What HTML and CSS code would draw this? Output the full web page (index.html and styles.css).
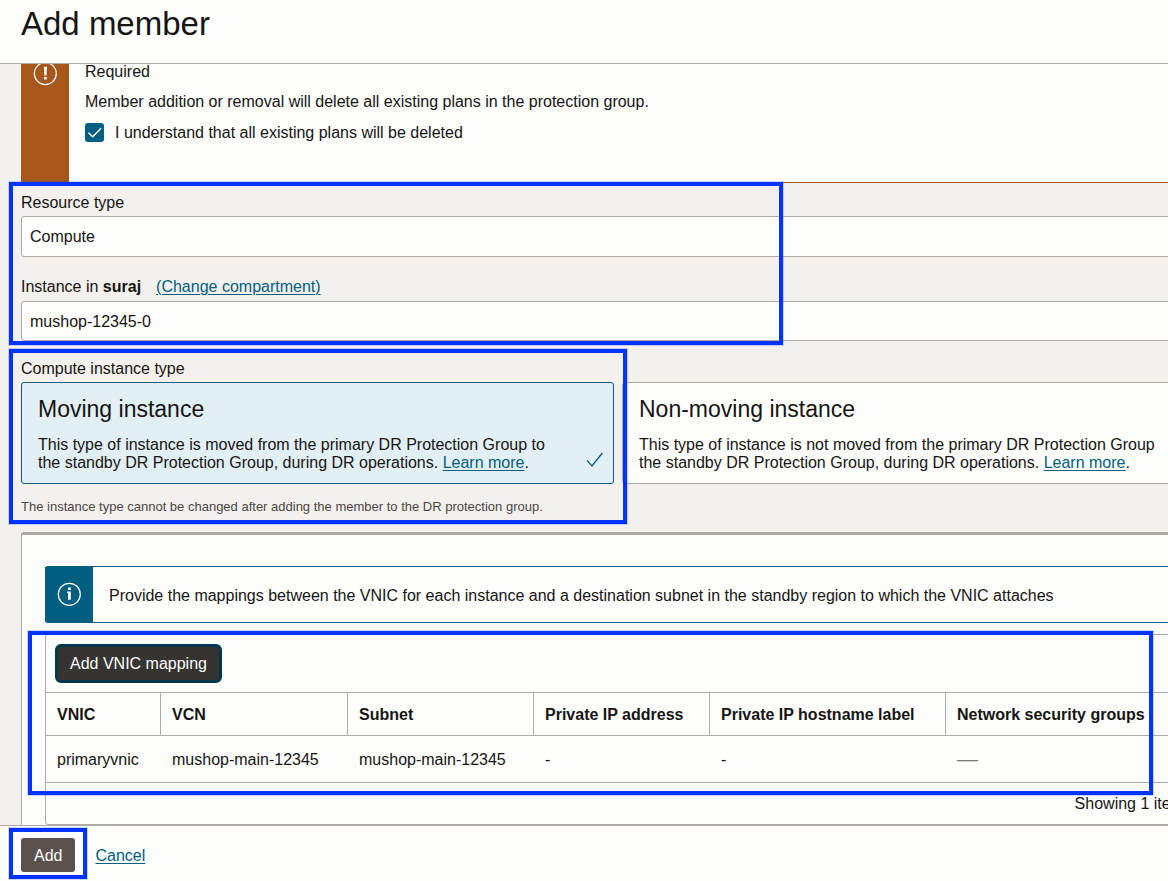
FILE: index.html
```html
<!DOCTYPE html>
<html lang="en">
<head>
<meta charset="utf-8">
<title>Add member</title>
<link rel="stylesheet" href="styles.css">
</head>
<body>
<div class="drawer">
  <header class="drawer-header"><h1>Add member</h1></header>
  <main class="drawer-body">
    <form class="form" id="member-form">
      <section class="alert">
        <div class="alert-icon">
          <svg width="24" height="24" viewBox="0 0 24 24" aria-hidden="true"><circle cx="12.3" cy="11.6" r="11" fill="none" stroke="currentColor" stroke-width="1.2"/><path d="M10.9 4.8h3l-.4 8.6h-2.2zM11 15h2.8v2.6H11z" fill="currentColor"/></svg>
        </div>
        <div class="alert-text">
          <p>Required</p>
          <p>Member addition or removal will delete all existing plans in the protection group.</p>
          <label class="check"><span class="check-box"><input type="checkbox" checked><svg width="19" height="19" viewBox="0 0 19 19" aria-hidden="true"><path d="M3.5 9.7l4.2 4L16 5.3" fill="none" stroke="currentColor" stroke-width="1.5"/></svg></span><span class="check-text">I understand that all existing plans will be deleted</span></label>
        </div>
      </section>

      <div class="field">
        <label for="resource-type">Resource type</label>
        <select id="resource-type"><option>Compute</option></select>
      </div>
      <div class="field">
        <div class="label-row"><label for="instance">Instance in <b>suraj</b></label><a href="#">(Change compartment)</a></div>
        <select id="instance"><option>mushop-12345-0</option></select>
      </div>
      <fieldset class="choices">
        <legend>Compute instance type</legend>
        <div class="cards">
          <div class="card selected">
            <input type="radio" name="kind" id="moving" checked>
            <label class="card-title" for="moving">Moving instance</label>
            <p>This type of instance is moved from the primary DR Protection Group to the standby DR Protection Group, during DR operations. <a href="#">Learn more</a>.</p>
            <svg class="card-tick" width="18" height="16" viewBox="0 0 18 16" aria-hidden="true"><path d="M1 8.4l5 5.6L16.3 1" fill="none" stroke="currentColor" stroke-width="1.3"/></svg>
          </div>
          <div class="card">
            <input type="radio" name="kind" id="non-moving">
            <label class="card-title" for="non-moving">Non-moving instance</label>
            <p>This type of instance is not moved from the primary DR Protection Group the standby DR Protection Group, during DR operations. <a href="#">Learn more</a>.</p>
          </div>
        </div>
        <p class="hint">The instance type cannot be changed after adding the member to the DR protection group.</p>
      </fieldset>

      <section class="panel">
        <div class="info">
          <div class="info-icon">
            <svg width="24" height="24" viewBox="0 0 24 24" aria-hidden="true"><circle cx="12.3" cy="12.3" r="11" fill="none" stroke="currentColor" stroke-width="1.2"/><path d="M11 5.4h2.8v2.7H11zM10.2 9.6h3.6v8.2H11v-6.9h-.8z" fill="currentColor"/></svg>
          </div>
          <p>Provide the mappings between the VNIC for each instance and a destination subnet in the standby region to which the VNIC attaches</p>
        </div>
        <div class="grid">
          <div class="toolbar"><button type="button" class="btn btn-focus">Add VNIC mapping</button></div>
          <table>
            <colgroup><col class="c-vnic"><col class="c-vcn"><col class="c-subnet"><col class="c-ip"><col class="c-host"><col></colgroup>
            <thead><tr><th>VNIC</th><th>VCN</th><th>Subnet</th><th>Private IP address</th><th>Private IP hostname label</th><th>Network security groups</th></tr></thead>
            <tbody><tr><td>primaryvnic</td><td>mushop-main-12345</td><td>mushop-main-12345</td><td>-</td><td>-</td><td><span class="none">—</span></td></tr></tbody>
          </table>
          <div class="grid-footer">Showing 1 item</div>
        </div>
      </section>
    </form>
  </main>
  <footer class="drawer-footer">
    <button type="submit" form="member-form" class="btn">Add</button>
    <a href="#">Cancel</a>
  </footer>
  <div class="mark mark-resource"></div>
  <div class="mark mark-type"></div>
  <div class="mark mark-mapping"></div>
  <div class="mark mark-add"></div>
</div>
</body>
</html>
```
FILE: styles.css
```css
* { box-sizing: border-box; }

:root {
  --surface: #fdfdfc;
  --page: #f4f0ed;
  --line: #b1aaa4;
  --text: #161513;
  --teal: #005f80;
  --orange: #a8571a;
  --mark: #0033ff;
}

body {
  margin: 0;
  font: 16px/20px "Liberation Sans", Arial, sans-serif;
  color: var(--text);
  background: var(--page);
}

h1, p { margin: 0; font-weight: normal; }
a { color: var(--teal); text-decoration: underline; text-underline-offset: 2px; text-decoration-thickness: 1px; }

.drawer {
  position: relative;
  display: flex;
  flex-direction: column;
  height: 100vh;
  overflow: hidden;
}

.drawer-header {
  flex: none;
  padding: 4px 21px 19px;
  background: var(--surface);
  border-bottom: 1px solid var(--line);
}
.drawer-header h1 { font-size: 33px; line-height: 40px; }

.drawer-body { flex: 1; min-height: 0; overflow: hidden; }

/* The form is wider than the drawer and runs off its right edge. */
.form { width: calc(100% + 47px); padding-left: 21px; margin-top: -16px; }

.alert {
  display: flex;
  min-height: 135px;
  margin-bottom: 10px;
  background: var(--surface);
  border-bottom: 1px solid var(--orange);
}
.alert-icon {
  flex: none;
  width: 48px;
  padding: 14px 12px;
  color: #fff;
  background: var(--orange);
}
.alert-text { display: flex; flex-direction: column; gap: 10px; padding: 14px 16px; }

.check { display: flex; align-items: flex-start; gap: 11px; padding-top: 1px; }
.check-box { position: relative; width: 19px; height: 19px; color: #fff; }
.check-box input {
  appearance: none;
  display: block;
  width: 19px;
  height: 19px;
  margin: 0;
  border-radius: 3px;
  background: var(--teal);
}
.check-box svg { position: absolute; inset: 0; }

.field { display: flex; flex-direction: column; gap: 3px; margin-bottom: 20px; }
.field + .choices { margin-top: -2px; }
.label-row { display: flex; gap: 15px; }
.label-row + select { height: 40px; margin-top: 1px; padding-top: 1px; }
select {
  appearance: none;
  height: 41px;
  padding: 0 8px;
  border: 1px solid var(--line);
  border-radius: 3px;
  font: inherit;
  color: inherit;
  background: var(--surface);
}

.choices { min-width: 0; margin: 0; padding: 0; border: 0; }
.choices legend { padding: 0; margin-bottom: 3px; }
.cards { display: grid; grid-template-columns: 1fr 1fr; gap: 8px; }
.card {
  position: relative;
  padding: 14px 48px 11px 16px;
  border: 1px solid var(--line);
  border-radius: 3px;
  background: var(--surface);
}
.card.selected { border-color: var(--teal); background: #e2eff4; }
.card input { position: absolute; inset: 0; margin: 0; opacity: 0; }
.card-title { display: block; margin-bottom: 15px; font-size: 23px; line-height: 24px; }
.card p { line-height: 18px; }
.card-tick { position: absolute; right: 9px; bottom: 15px; color: var(--teal); }
.hint { margin: 14px 0 17px; font-size: 13px; line-height: 17px; color: #4a4744; }

.panel {
  padding: 31px 24px 0 23px;
  border: 1px solid var(--line);
  border-top-width: 3px;
  border-bottom: 0;
  border-radius: 3px 3px 0 0;
  background: var(--surface);
}
.info {
  display: flex;
  align-items: center;
  margin-bottom: 11px;
  border: 1px solid var(--teal);
  border-left: 0;
  border-radius: 3px;
}
.info-icon {
  flex: none;
  width: 48px;
  height: 55px;
  padding: 15px 12px;
  color: #fff;
  background: var(--teal);
}
.info p { padding: 2px 16px 0; }

.grid { border: 1px solid var(--line); border-radius: 3px; }
.toolbar { padding: 9px; }

.btn {
  height: 34px;
  padding: 1px 13px 0;
  border: 0;
  border-radius: 3px;
  font: inherit;
  color: #fdfdfc;
  background: #5b524f;
}
.btn-focus {
  display: block;
  height: 39px;
  border: 3px solid #00384d;
  padding: 0 12px;
  border-radius: 6px;
  background: #363431;
}

table { width: 100%; table-layout: fixed; border-collapse: separate; border-spacing: 0; }
th, td { padding: 2px 11px 0; text-align: left; white-space: nowrap; }
th {
  height: 44px;
  border-top: 1px solid var(--line);
  border-bottom: 1px solid var(--line);
  border-right: 1px solid var(--line);
}
th:last-child { border-right: 0; }
td { height: 47px; border-bottom: 1px solid var(--line); }
.c-vnic { width: 115px; }
.c-vcn { width: 187px; }
.c-subnet { width: 186px; }
.c-ip { width: 176px; }
.c-host { width: 236px; }
.none { font-size: 21px; line-height: 20px; color: #7a7673; }
.grid-footer { padding: 11px 5px 10px; text-align: right; }

.drawer-footer {
  flex: none;
  display: flex;
  align-items: center;
  gap: 20px;
  padding: 12px 21px 9px;
  border-top: 1px solid var(--line);
  background: var(--surface);
}
.drawer-footer a { padding-top: 2px; }

/* Annotation frames drawn over the form. */
.mark {
  position: absolute;
  border: 4px solid var(--mark);
  box-shadow: 0 0 0 1px rgba(0, 51, 255, .2);
  pointer-events: none;
}
.mark-resource { left: 9px; top: 182px; width: 774px; height: 163px; }
.mark-type { left: 9px; top: 349px; width: 618px; height: 175px; }
.mark-mapping { left: 28px; top: 631px; width: 1125px; height: 164px; }
.mark-add { left: 9px; top: 828px; width: 78px; height: 51px; }
```
